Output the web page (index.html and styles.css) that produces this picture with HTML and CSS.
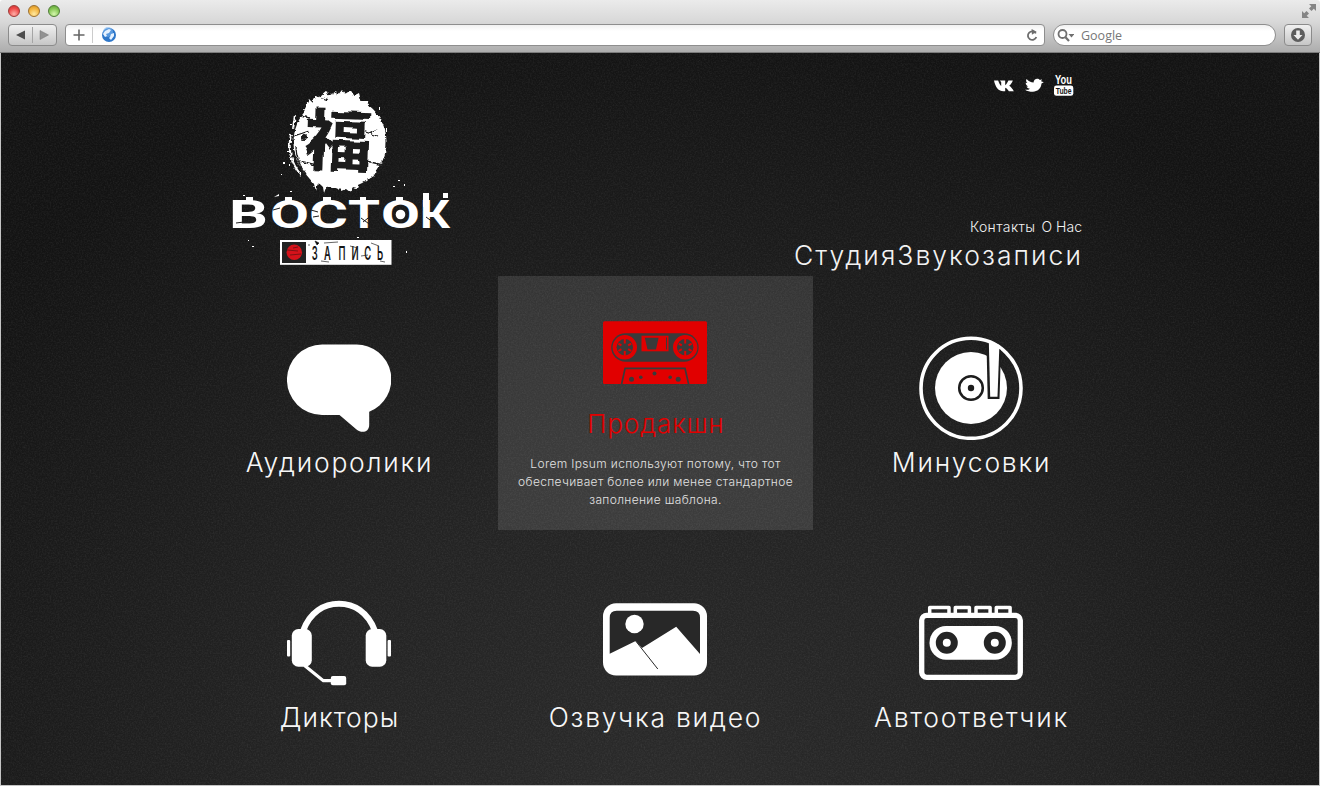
FILE: index.html
```html
<!DOCTYPE html>
<html lang="ru">
<head>
<meta charset="utf-8">
<title>Восток Запись</title>
<link rel="stylesheet" href="styles.css">
</head>
<body>
<div class="browser">
  <div class="chrome">
    <div class="titlebar">
      <span class="light red"></span><span class="light yellow"></span><span class="light green"></span>
      <svg class="expand" width="14" height="14" viewBox="0 0 14 14" fill="#858585"><path d="M7 0h7v7l-2.200-2.200L9.500 7 7 4.500l2.300-2.300zM0 14V7l2.200 2.200L4.500 7 7 9.500l-2.300 2.300L7 14z"/></svg>
    </div>
    <div class="toolbar">
      <div class="arrows">
        <svg width="47" height="20" viewBox="0 0 47 20"><path d="M16 5.500v9L7 10z" fill="#4d4d4d"/><path d="M23.500 2v16" stroke="#a5a5a5"/><path d="M31 5.500v9l8.500-4.500z" fill="#929292" stroke="#777" stroke-width=".5"/></svg>
      </div>
      <div class="address">
        <svg width="52" height="20" viewBox="0 0 52 20"><path d="M13 4.500v11M7.500 10h11" stroke="#666" stroke-width="1.600"/><path d="M26.500 2v16" stroke="#ccc"/><circle cx="43" cy="10" r="7" fill="#2e77c9"/><circle cx="42" cy="7" r="5" fill="#78b2ee" opacity=".6"/><path d="M39 6l4-2 2 1-2 3-3 1 1 2-2 1-2-3zM45 9l3-1v3l-3 4-2-2 1-1z" fill="#e6f2ff"/></svg>
        <svg class="reload" width="14" height="20" viewBox="0 0 14 20"><path d="M10.900 8.400A4.300 4.300 0 1 0 11.300 12" fill="none" stroke="#6d6d6d" stroke-width="1.800"/><path d="M6.600 4l5 2.800-4.700 3z" fill="#6d6d6d"/></svg>
      </div>
      <div class="search">
        <svg width="20" height="20" viewBox="0 0 20 20"><circle cx="8.500" cy="9" r="4" fill="none" stroke="#707070" stroke-width="1.800"/><path d="M11.500 12.200l3.500 3.800" stroke="#707070" stroke-width="2.200"/><path d="M14.500 9h6L17.500 12.500z" fill="#707070"/></svg>
        <span class="search-text">Google</span>
      </div>
      <div class="download">
        <svg width="26" height="20" viewBox="0 0 26 20"><circle cx="13" cy="10" r="7" fill="#5d5d5d"/><path d="M11.200 5.500h3.600V10h2.700L13 14.800 8.500 10h2.700z" fill="#eee"/></svg>
      </div>
    </div>
  </div>

  <div class="page">
    <svg class="grain" width="100%" height="100%"><filter id="noise"><feTurbulence type="fractalNoise" baseFrequency=".65" numOctaves="2" seed="4"/><feColorMatrix values="0 0 0 0 1  0 0 0 0 1  0 0 0 0 1  .3 .3 0 0 -.24"/></filter><rect width="100%" height="100%" filter="url(#noise)"/></svg>
    <div class="content">
      <header class="header">
        <svg class="logo" width="240" height="195" viewBox="0 0 240 195">
          <defs>
            <filter id="rough" x="-10%" y="-10%" width="120%" height="120%"><feTurbulence type="fractalNoise" baseFrequency=".25" numOctaves="2" seed="7"/><feDisplacementMap in="SourceGraphic" scale="4" xChannelSelector="R" yChannelSelector="G"/></filter>
            <filter id="brush" x="-10%" y="-10%" width="120%" height="120%"><feTurbulence type="fractalNoise" baseFrequency=".07" numOctaves="1" seed="3"/><feDisplacementMap in="SourceGraphic" scale="7" xChannelSelector="R" yChannelSelector="G"/></filter>
          </defs>
          <g filter="url(#rough)">
            <circle cx="120" cy="62" r="46.500" fill="#fff"/>
            <path fill="#fff" d="M84 30l5-11 3 3 5-7 3 2 7-6 1 5 8-5 1 5 5-6 3 4 6-4 2 6 6-3 2 8 6 0 3 9 5 3 2 10zM84 92l10 12 2 7 2-9 5 5 1 6 3-8 6 3 2-3 6 6 5-2 4 3 3-5 4 1 2-8 6 2 3-7 5 2 7-12z"/>
            <path fill="none" stroke="#fff" stroke-width="2" d="M71 55c-4 16 1 29 10 40M75 35l-2 13"/>
            <path fill="none" stroke="#1b1b1b" stroke-width="1.300" d="M71 57l18-6M76 66c0 12 4 21 10 28M79 81l18 4M137 49l20 7M138 79l25 6M149 53l8-4M80 36l10 2M100 17l8 3"/>
            <circle cx="84" cy="57" r="3" fill="#1b1b1b"/>
          </g>
          <g filter="url(#brush)"><text class="logo-glyph" transform="translate(117 86) rotate(2)" text-anchor="middle">福</text></g>
          <g class="logo-word">
            <text x="9" y="148.300" textLength="39" lengthAdjust="spacingAndGlyphs">В</text>
            <text x="50" y="148.300" textLength="39" lengthAdjust="spacingAndGlyphs">О</text>
            <text x="89" y="148.300" textLength="39" lengthAdjust="spacingAndGlyphs">С</text>
            <text x="128" y="148.300" textLength="32" lengthAdjust="spacingAndGlyphs">Т</text>
            <text x="161" y="148.300" textLength="39" lengthAdjust="spacingAndGlyphs">О</text>
            <text x="200" y="148.300" textLength="30" lengthAdjust="spacingAndGlyphs">К</text>
          </g>
          <path fill="#fff" d="M26 117h7v6h-7zM65 117h7v6h-7zM103 117h8v6h-8zM140 117h6v6h-6zM176 117h7v6h-7zM203 113h6v14h-6zM223 113h5v5h-5z"/>
          <circle cx="180.500" cy="134.500" r="4.800" fill="#fff"/>
          <path stroke="#1b1b1b" fill="none" d="M91 130l7 2M93 137l6-1M141 138l11 8M143 142l9-7M206 137l11 8M16 143l8-1M60 128l-7 2"/>
          <path fill="#fff" d="M70 44h2v1h-2zM67 71h2v1h-2zM61 94h1v1h-1zM63 82h2v2h-2zM69 84h1v2h-1zM159 27h1v3h-1zM166 48h1v4h-1zM178 100h2v1h-2zM173 106h2v1h-2zM184 104h1v2h-1zM54 117l5-3v2zM23 115h2v1h-2zM70 111h2v1h-2zM32 166h2v1h-2zM28 160h1v1h-1zM186 171h1v2h-1zM137 157h2v1h-2z"/>
          <rect x="60" y="160" width="111.500" height="24.800" fill="#fff"/>
          <rect x="62" y="162" width="24" height="21" fill="#222"/>
          <circle cx="74.300" cy="172.300" r="7.700" fill="#d5121a"/>
          <path d="M67 170l11 1M70 175l11-1M73 168l5-1" stroke="#511" stroke-width=".7"/>
          <text class="logo-sub" transform="translate(0 179.500) scale(.52 1)" x="182 206.500 234.600 259.600 284 307.700" text-anchor="middle">ЗАПИСЬ</text>
          <path d="M95 161l4 2-2 2zM104 163l14-1M130 166l8 2M141 176l7-1M101 181l8 1M151 163l8 3M160 181l5 1M88 165l2 0" stroke="#222" stroke-width=".7"/>
        </svg>
        <div class="header-right">
          <div class="social">
            <svg width="20" height="24" viewBox="0 -2 20 24"><path fill="#fff" d="M0 5.500h4.200c.8 2.600 1.700 4.300 3 5.400V7.300L6 5.500h5.200v4.700c1.500-1.200 2.400-2.800 3.200-4.700h4.400c-.6 2.100-1.900 3.800-3.600 5.300 2 1.400 3.400 3.100 4.600 5.500h-4.900c-.9-1.700-2-3-3.700-3.600v3.600H9.500C4.500 16.300 1.500 12.400 0 5.500z"/></svg>
            <svg width="20" height="24" viewBox="0 -2 20 24"><path transform="translate(1 1.200)" fill="#fff" d="M0 13.500c2 .4 3.500.1 5-1-1.700-.1-2.900-.8-3.400-2.200h1.700C1.600 9.400.8 8.300.7 6.500l1.700.4C.9 5.600.8 4.200 1.600 2.800c1.900 2.200 4.200 3.400 7 3.600C8.500 3.900 10.400 2.500 12.200 2.500c1.200 0 2 .5 2.700 1.200l2-.7-.8 2 2.700 1.100-2.300 1.300c-.3 5-4.300 8.200-8.600 8.200-3.200 0-5.700-.6-7.900-2.100z"/></svg>
            <svg width="20" height="24" viewBox="0 -2 20 24"><text class="yt-you" x="1" y="8.700" textLength="17" lengthAdjust="spacingAndGlyphs">You</text><rect x="0" y="10.600" width="19.300" height="10.200" rx="2.400" fill="#fff"/><text class="yt-tube" x="1.800" y="18.900" textLength="15.800" lengthAdjust="spacingAndGlyphs">Tube</text></svg>
          </div>
          <nav class="nav"><a class="nav-contacts">Контакты</a><a>О Нас</a></nav>
          <div class="slogan">СтудияЗвукозаписи</div>
        </div>
      </header>

      <main class="grid">
        <section class="cell">
          <svg class="icon" viewBox="0 0 104 104" fill="#fff"><path d="M35 8.500H69A34.800 34.800 0 0 1 82.200 75.700V89C82 96.500 74.500 97.500 69.500 93.500L52.500 79H35A35 35.200 0 0 1 35 8.500z"/></svg>
          <h2 class="title">Аудиоролики</h2>
        </section>
        <section class="cell active">
          <svg class="icon" viewBox="0 0 104 104" fill="#e10000">
            <rect y="21.300" width="104" height="62.700" rx="1.500"/>
            <rect x="8.200" y="33.300" width="87.400" height="28.400" rx="14.200" class="cut"/>
            <g id="reel"><circle cx="21.800" cy="47.300" r="12.200"/><circle cx="21.800" cy="47.300" r="8.200" class="cut"/><path d="M21.800 38.500v5M21.800 51.100v5M15.400 43.600l3 1.800M25.200 49.200l3 1.800M15.400 51l3-1.800M25.200 45.400l3-1.800" stroke="#e10000" stroke-width="2"/></g>
            <use href="#reel" x="60.400"/>
            <rect x="38.500" y="35.700" width="27" height="15.600"/>
            <path class="cut" d="M41.800 37.700h13.800l-2.600 11.800h-8.500zM63 37.500h1v12h-1z"/>
            <path d="M18.500 84.500l3.600-16.200H82L85.700 84.500" fill="none" stroke="#3a3a3a" stroke-width="1.700"/>
            <g class="cut"><circle cx="28.500" cy="79.300" r="2.500"/><circle cx="37.800" cy="77.300" r="1.800"/><circle cx="51.500" cy="73.500" r="2"/><circle cx="67.200" cy="77.300" r="1.800"/><circle cx="75.200" cy="79.300" r="2.500"/></g>
          </svg>
          <h2 class="title">Продакшн</h2>
          <p class="text">Lorem Ipsum используют потому, что тот<br>обеспечивает более или менее стандартное<br>заполнение шаблона.</p>
        </section>
        <section class="cell">
          <svg class="icon" viewBox="0 0 104 104" fill="#fff"><circle cx="52" cy="52.300" r="50" fill="none" stroke="#fff" stroke-width="3.600"/><circle cx="52" cy="52" r="36"/><circle cx="52" cy="52" r="11.800" fill="none" stroke="#1d1d1d" stroke-width="2.500"/><circle cx="52" cy="52" r="3.200" fill="#1d1d1d"/><path fill="#1d1d1d" d="M67.500 8L68.700 63H80.500L82 14z"/><path d="M69.800 4.500L71.200 60.700H78.500L80.400 9z"/></svg>
          <h2 class="title">Минусовки</h2>
        </section>
        <section class="cell">
          <svg class="icon" viewBox="0 0 104 104" fill="#fff"><path d="M16 40C23 21 37 12.800 52 12.800S81 21 88 40" fill="none" stroke="#fff" stroke-width="6"/><rect x="4.800" y="38" width="20" height="37.700" rx="6.500"/><rect x="78.700" y="38" width="20.600" height="37.700" rx="6.500"/><rect y="49" width="3.200" height="16.500" rx="1"/><rect x="100.600" y="49" width="3.400" height="16.500" rx="1"/><path d="M17.500 74.500L36.300 89.700H46" fill="none" stroke="#fff" stroke-width="3.200"/><rect x="43.800" y="85" width="15.400" height="9.300" rx="2"/></svg>
          <h2 class="title tight">Дикторы</h2>
        </section>
        <section class="cell">
          <svg class="icon" viewBox="0 0 104 104" fill="#fff"><rect y="12.300" width="104" height="72.300" rx="13"/><path fill="#282828" d="M6.700 62.700V26.700Q6.700 19.700 13.700 19.700H90Q97 19.700 97 26.700V63L73.200 35.700 39 57 32.700 50z"/><circle cx="31.500" cy="33" r="9.200"/><path d="M32.700 50L54.800 78" stroke="#282828" stroke-width="1"/></svg>
          <h2 class="title">Озвучка видео</h2>
        </section>
        <section class="cell">
          <svg class="icon" viewBox="0 0 104 104" fill="#fff"><rect x="2.700" y="24.300" width="98.600" height="62" rx="5" fill="none" stroke="#fff" stroke-width="5.300"/><path d="M10.700 24V16.500H30V24M36.300 24V16.500H50.400V24M57 24V16.500H71.100V24M77.300 24V16.500H91.100V24" fill="none" stroke="#fff" stroke-width="3.500" stroke-linejoin="round"/><rect x="10.500" y="35" width="82.300" height="33.700" rx="16.500"/><g fill="none" stroke="#242424" stroke-width="7"><circle cx="27.800" cy="51.800" r="7.500"/><circle cx="75.800" cy="51.800" r="7.500"/></g></svg>
          <h2 class="title">Автоответчик</h2>
        </section>
      </main>
    </div>
  </div>
</div>
</body>
</html>
```

FILE: styles.css
```css
* { box-sizing: border-box; }
body { margin: 0; background: #fff; font-family: Inter, "Open Sans", sans-serif; }
svg { display: block; flex: none; }

.browser { width: 1320px; height: 786px; display: flex; flex-direction: column; overflow: hidden; }

/* Browser frame */
.chrome { height: 53px; flex: none; background: linear-gradient(#ebebeb, #d8d8d8 42%, #adadad); border-bottom: 1px solid #7c7c7c; border-radius: 3px 3px 0 0; }
.titlebar { height: 24px; display: flex; padding: 5px 4px 0 8px; gap: 8px; }
.light { width: 12px; height: 12px; border-radius: 50%; border: 1px solid; }
.red { background: radial-gradient(circle at 50% 80%, #ffb0a8, #ee4a49 60%, #c9302f); border-color: #9e3b38; }
.yellow { background: radial-gradient(circle at 50% 80%, #ffe9a0, #f2b23c 60%, #d08f22); border-color: #9c7030; }
.green { background: radial-gradient(circle at 50% 80%, #d5f7ad, #83c552 60%, #5c9c37); border-color: #4f7c38; }
.expand { margin-left: auto; margin-top: -1px; }
.toolbar { display: flex; height: 22px; padding: 0 8px; }
.arrows, .download { height: 22px; border: 1px solid #8b8b8b; border-radius: 4px; background: linear-gradient(#f0f0f0, #c6c6c6); }
.arrows { width: 49px; }
.download { width: 28px; margin-left: 8px; }
.address { width: 980px; margin-left: 8px; display: flex; justify-content: space-between; padding-right: 5px; height: 22px; border: 1px solid #8e8e8e; border-radius: 4px; background: linear-gradient(#f1f1f1, #fff 30%); }
.search { width: 223px; margin-left: 8px; height: 22px; display: flex; align-items: center; gap: 7px; border: 1px solid #8e8e8e; border-radius: 11px; background: linear-gradient(#f1f1f1, #fff 30%); }
.search-text { font: 12.5px/20px "Open Sans", sans-serif; color: #777; padding-top: 2px; }

/* Site */
.page { position: relative; flex: 1; border: 1px solid #c4c4c4; border-top: 0; background: radial-gradient(ellipse 900px 800px at 50% 105%, #2b2b2b, #232323 45%, #191919 80%, #131313); }
.grain { position: absolute; inset: 0; opacity: .28; }
.content { position: relative; width: 947px; margin-left: 181px; }
.header { height: 223px; display: flex; justify-content: space-between; padding: 20px 47px 0 38px; }
.logo { margin-top: 7px; }
.logo-glyph { font: 700 68px "Noto Sans CJK JP", sans-serif; fill: #1b1b1b; }
.logo-word { font: 700 38px Roboto, sans-serif; fill: #fff; }
.logo-sub { font: 600 18px Inter, sans-serif; fill: #151515; }
.header-right { display: flex; flex-direction: column; align-items: flex-end; color: #f2f2f2; }
.social { display: flex; gap: 10px; margin-right: 8px; height: 24px; margin-bottom: 121px; }
.yt-you { font: 700 12px "Liberation Sans", sans-serif; fill: #fff; }
.yt-tube { font: 700 8.5px "Liberation Sans", sans-serif; fill: #151515; }
.nav { display: flex; gap: 6px; font-size: 14px; line-height: 18px; font-weight: 300; height: 18px; }
.nav-contacts { letter-spacing: .4px; }
.slogan { font-size: 26.5px; line-height: 36px; font-weight: 300; letter-spacing: 2.05px; margin: 1px -1px 0 0; }

.grid { display: grid; grid-template-columns: repeat(3, 315px); column-gap: 1px; grid-auto-rows: 254px; row-gap: 1px; }
.cell { display: flex; flex-direction: column; align-items: center; padding-top: 60px; color: #f7f7f7; }
.active { padding-top: 24px; background: rgba(255, 255, 255, .115); }
.icon { width: 104px; height: 104px; margin-right: 1px; }
.cut { fill: #3a3a3a; }
.title { margin: 4px 0 0; font-size: 26.5px; line-height: 36px; font-weight: 300; letter-spacing: 1.75px; white-space: nowrap; }
.tight { letter-spacing: 1px; }
.active .title { margin: 2px -1px 0 0; font-size: 26px; letter-spacing: .9px; color: #e10000; }
.text { margin: 13px 0 0; font-size: 12px; line-height: 18px; font-weight: 300; letter-spacing: .35px; text-align: center; white-space: nowrap; color: #e2e2e2; }
```
